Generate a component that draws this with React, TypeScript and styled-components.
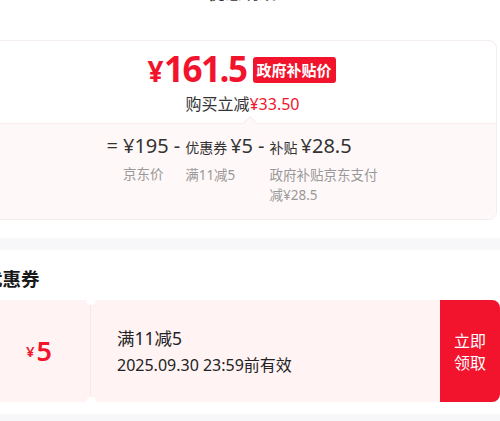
import React from "react";
import styled, { createGlobalStyle } from "styled-components";

const Global = createGlobalStyle`
  html, body { margin: 0; padding: 0; background: #fff; overflow: hidden; }
  body { font-family: "Noto Sans", "Noto Sans CJK SC", sans-serif; color: #1a1a1a; }
  * { box-sizing: border-box; }
`;

const RED = "#f2142d";

const Page = styled.div`
  width: 516px;
  margin-left: -16px;
  display: flex;
  flex-direction: column;
`;

const Header = styled.div`
  height: 20px;
  margin-top: -17px;
  display: flex;
  align-items: center;
  justify-content: center;
  position: relative;
`;

const Title = styled.div`
  font-size: 17px;
  line-height: 20px;
  font-weight: 600;
  color: #333;
`;

const Close = styled.span`
  position: absolute;
  right: 6px;
  top: 0;
  font-size: 18px;
  line-height: 20px;
  color: #bbb;
`;

const Card = styled.div`
  margin: 37px 3px 0 4px;
  border: 1px solid #f3eded;
  border-radius: 8px;
  overflow: hidden;
  display: flex;
  flex-direction: column;
`;

const Top = styled.div`
  padding: 9px 0 8px;
  display: flex;
  flex-direction: column;
  align-items: center;
`;

const PriceRow = styled.div`
  display: flex;
  align-items: center;
  gap: 6px;
  height: 40px;
  margin-left: -2px;
`;

const Price = styled.div`
  color: ${RED};
  font-weight: 700;
  font-size: 35px;
  line-height: 40px;
  letter-spacing: -1.5px;
  font-family: "Open Sans", "Noto Sans", sans-serif;
`;

const Yen = styled.span<{ $size: number }>`
  font-size: ${(p) => p.$size}px;
  margin-right: 2px;
`;

const Tag = styled.span`
  background: ${RED};
  color: #fff;
  font-size: 15px;
  font-weight: 700;
  line-height: 26px;
  padding: 0 4px;
  border-radius: 3px;
  font-family: "Noto Sans CJK SC", sans-serif;
`;

const Saving = styled.div`
  margin-top: 2px;
  font-size: 16px;
  line-height: 22px;
  color: #333;
  font-family: "Noto Sans CJK SC", sans-serif;
`;

const Red = styled.span`
  color: ${RED};
  font-family: "Noto Sans", "Noto Sans CJK SC", sans-serif;
`;

const Bottom = styled.div`
  position: relative;
  background: #fff8f8;
  border-top: 1px solid #f9eeee;
  padding: 8px 0 14px;
  display: flex;
  justify-content: center;
  &::before {
    content: "";
    position: absolute;
    top: -6px;
    left: 256px;
    width: 9px;
    height: 9px;
    background: #fff8f8;
    border-left: 1px solid #f9eeee;
    border-top: 1px solid #f9eeee;
    transform: rotate(45deg);
  }
`;

const Formula = styled.div`
  display: flex;
  align-items: flex-start;
  gap: 4px;
  color: #333;
  margin-left: 2px;
`;

const Op = styled.div`
  font-size: 20px;
  line-height: 28px;
  padding: 0 1px;
`;

const Item = styled.div`
  display: flex;
  flex-direction: column;
`;

const ItemTop = styled.div`
  font-size: 20px;
  line-height: 28px;
  white-space: nowrap;
`;

const Small = styled.span`
  font-size: 14px;
  margin-right: 3px;
  font-family: "Noto Sans CJK SC", sans-serif;
`;

const Label = styled.div<{ $max?: number }>`
  margin-top: 4px;
  font-size: 13.5px;
  line-height: 20px;
  color: #999;
  max-width: ${(p) => (p.$max ? `${p.$max}px` : "none")};
`;

const Band = styled.div<{ $top: number }>`
  margin-top: ${(p) => p.$top}px;
  height: 12px;
  background: #f7f7fa;
`;

const SectionTitle = styled.div`
  margin-top: 16px;
  font-size: 18.5px;
  line-height: 24px;
  font-weight: 700;
  color: #1a1a1a;
  font-family: "Noto Sans CJK SC", sans-serif;
`;

const Coupon = styled.div`
  margin: 10px 0 0 4px;
  height: 102px;
  display: flex;
`;

const Stub = styled.div`
  position: relative;
  width: 103px;
  background: #fff3f4;
  border-radius: 8px 0 0 8px;
  display: flex;
  align-items: center;
  justify-content: center;
  color: ${RED};
  font-weight: 600;
  border-right: 1px solid #fbe6e8;
  &::before,
  &::after {
    content: "";
    position: absolute;
    right: -6px;
    width: 10px;
    height: 10px;
    border-radius: 50%;
    background: #fff;
  }
  &::before { top: -5px; }
  &::after { bottom: -5px; }
`;

const StubAmount = styled.span`
  font-size: 27px;
  line-height: 30px;
`;

const Body = styled.div`
  flex: 1;
  background: #fff3f4;
  padding-left: 26px;
  display: flex;
  flex-direction: column;
  justify-content: center;
  color: #222;
  font-family: "Noto Sans", "Noto Sans CJK SC", sans-serif;
`;

const Rule = styled.div`
  font-size: 17.5px;
  line-height: 27px;
`;

const Expire = styled.div`
  font-size: 16px;
  line-height: 26px;
`;

const Claim = styled.button`
  width: 60px;
  border: none;
  background: ${RED};
  color: #fff;
  border-radius: 0 8px 8px 0;
  font-size: 16px;
  line-height: 22px;
  font-family: "Noto Sans CJK SC", sans-serif;
  padding: 0;
`;

export default function App() {
  return (
    <>
      <Global />
      <Page>
        <Header>
          <Title>优惠明细</Title>
          <Close>×</Close>
        </Header>
        <Card>
          <Top>
            <PriceRow>
              <Price>
                <Yen $size={28}>¥</Yen>161.5
              </Price>
              <Tag>政府补贴价</Tag>
            </PriceRow>
            <Saving>
              购买立减<Red>¥33.50</Red>
            </Saving>
          </Top>
          <Bottom>
            <Formula>
              <Op>=</Op>
              <Item>
                <ItemTop>¥195</ItemTop>
                <Label>京东价</Label>
              </Item>
              <Op>-</Op>
              <Item>
                <ItemTop>
                  <Small>优惠券</Small>¥5
                </ItemTop>
                <Label>满11减5</Label>
              </Item>
              <Op>-</Op>
              <Item>
                <ItemTop>
                  <Small>补贴</Small>¥28.5
                </ItemTop>
                <Label $max={112}>政府补贴京东支付减¥28.5</Label>
              </Item>
            </Formula>
          </Bottom>
        </Card>
        <Band $top={18} />
        <SectionTitle>优惠券</SectionTitle>
        <Coupon>
          <Stub>
            <Yen $size={15}>¥</Yen>
            <StubAmount>5</StubAmount>
          </Stub>
          <Body>
            <Rule>满11减5</Rule>
            <Expire>2025.09.30 23:59前有效</Expire>
          </Body>
          <Claim>
            立即
            <br />
            领取
          </Claim>
        </Coupon>
        <Band $top={12} />
      </Page>
    </>
  );
}
